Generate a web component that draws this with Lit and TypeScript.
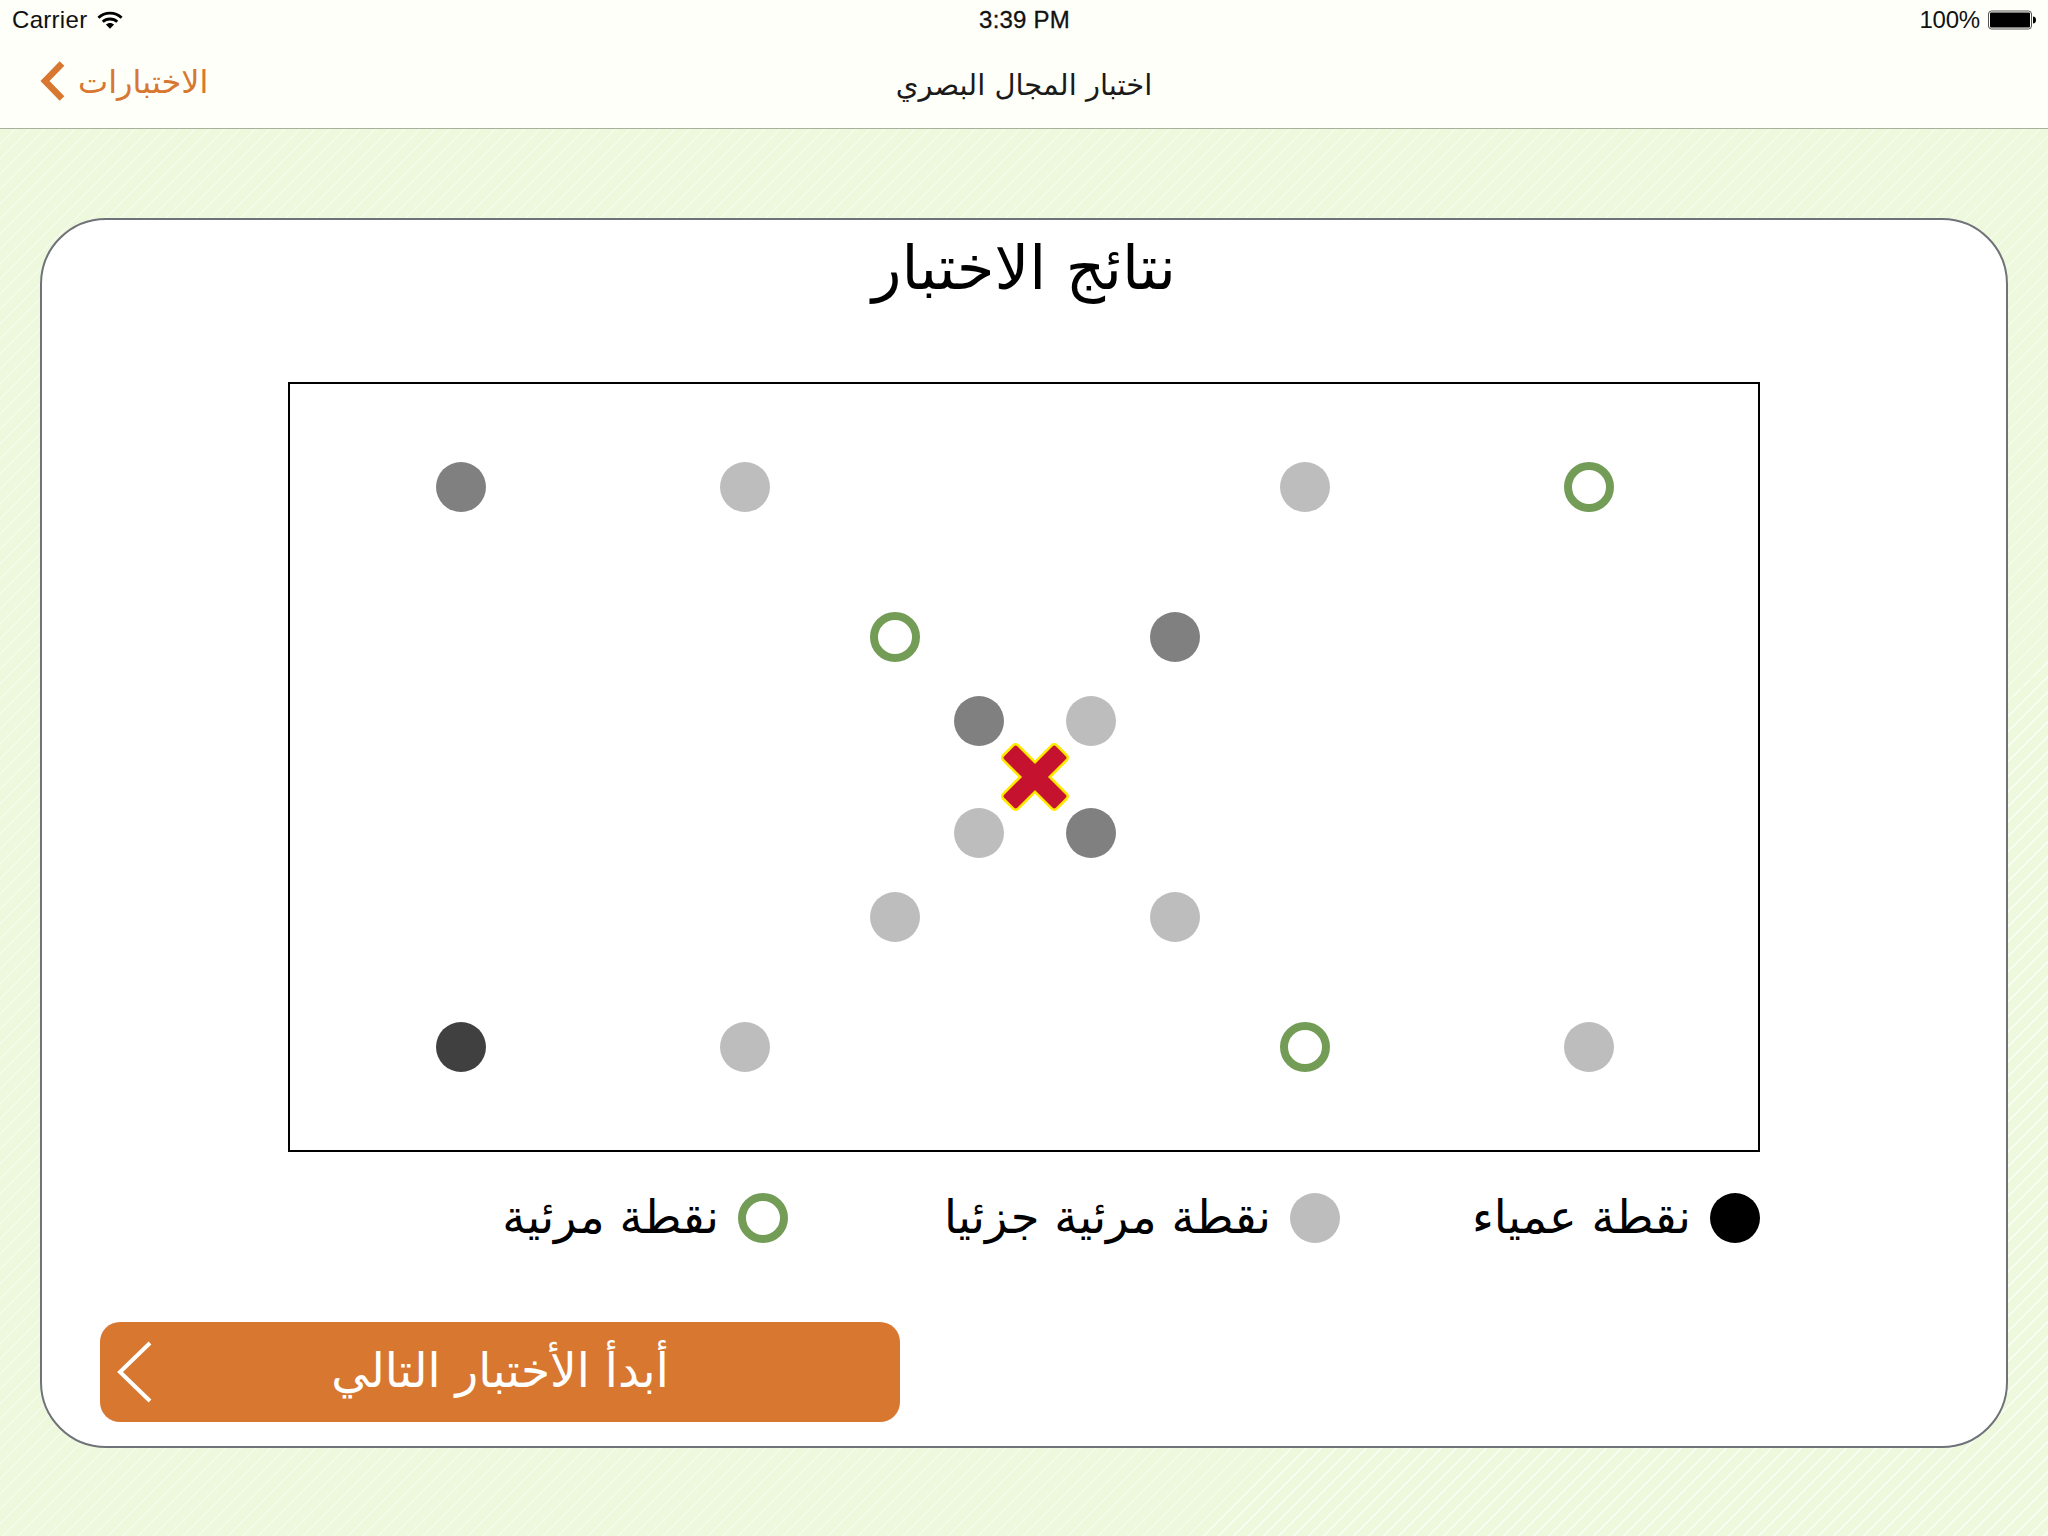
import { LitElement, html, css, svg } from "lit";
import { customElement } from "lit/decorators.js";

type Kind = "mid" | "light" | "dark" | "ring";
const BOARD_X = 290;
const BOARD_Y = 384;
const DOTS: [number, number, Kind][] = [
  [461, 487, "mid"], [745, 487, "light"], [1305, 487, "light"], [1589, 487, "ring"],
  [895, 637, "ring"], [1175, 637, "mid"],
  [979, 721, "mid"], [1091, 721, "light"],
  [979, 833, "light"], [1091, 833, "mid"],
  [895, 917, "light"], [1175, 917, "light"],
  [461, 1047, "dark"], [745, 1047, "light"], [1305, 1047, "ring"], [1589, 1047, "light"],
];

const CROSS = "M-7 -34.3H7V-7H34.3V7H7V34.3H-7V7H-34.3V-7H-7Z";

@customElement("app-root")
export class AppRoot extends LitElement {
  static styles = css`
    :host { display: block; width: 2048px; height: 1536px; overflow: hidden; font-family: "Liberation Sans", sans-serif; }
    .page {
      width: 2048px; height: 1536px; display: flex; flex-direction: column;
      background-color: #edf8dd;
      background-image: repeating-linear-gradient(135deg, #edf8dd 0, #edf8dd 6.1px, #fbfef6 6.1px, #fbfef6 7px, #edf8dd 7px, #edf8dd 10.607px);
    }
    .head { background: #fdfff8; border-bottom: 1px solid #a9b09e; height: 128px; flex: none; }
    .status { height: 40px; display: grid; grid-template-columns: 1fr auto 1fr; align-items: center; font-size: 24px; color: #111; padding: 0 11px 0 12px; }
    .status-l { display: flex; align-items: center; gap: 10px; letter-spacing: 0.3px; }
    .status-r { display: flex; align-items: center; justify-content: flex-end; gap: 7px; letter-spacing: -0.2px; }
    .time { font-weight: 400; letter-spacing: 0.2px; -webkit-text-stroke: 0.3px #111; }
    .nav { height: 88px; display: grid; grid-template-columns: 1fr auto 1fr; align-items: center; padding: 0 40px; }
    .back { display: flex; align-items: center; gap: 12px; color: #d87730; font-size: 32px; }
    .back svg { display: block; margin-top: -6px; }
    .back span { margin-top: -4px; }
    .nav-title { font-size: 29px; color: #1a1a1a; margin-top: 2px; }
    .ar { font-family: "DejaVu Sans", sans-serif; }
    .main { flex: 1; padding: 89px 40px 0; }
    .card {
      box-sizing: border-box; width: 1968px; height: 1230px; background: #fff;
      border: 2px solid #6f7379; border-radius: 66px;
    }
    .title { margin: 0; height: 96px; line-height: 96px; text-align: center; font-size: 61px; font-weight: 400; color: #000; }
    .board {
      position: relative; box-sizing: border-box; width: 1472px; height: 770px; margin: 66px auto 0;
      border: 2px solid #000;
    }
    .dot { position: absolute; box-sizing: border-box; width: 50px; height: 50px; border-radius: 50%; }
    .mid { background: #808080; }
    .light { background: #bdbdbd; }
    .dark { background: #404040; }
    .black { background: #000; }
    .ring { border: 8px solid #739c57; background: #fff; }
    .cross { position: absolute; left: 709px; top: 357px; display: block; }
    .legend { width: 1472px; margin: 41px auto 0; display: grid; grid-template-columns: 420px 552px auto; justify-content: start; }
    .item { display: flex; align-items: center; gap: 19px; font-size: 46.5px; color: #000; height: 50px; }
    .item-text { margin-top: -2px; }
    .swatch { position: static; flex: none; }
    .go {
      position: relative; box-sizing: border-box; width: 800px; height: 100px; margin: 79px 0 0 58px;
      background: #d87730; border-radius: 20px; color: #fff; font-size: 47px;
      display: flex; align-items: center; justify-content: center;
    }
    .go span { margin-top: -4px; }
    .go svg { position: absolute; left: 15px; top: 19px; display: block; }
  `;

  private wifi() {
    return html`<svg width="26" height="20" viewBox="0 0 28 20">
      <path d="M1.5 7.6C8.5 .9 19.5 .9 26.5 7.6" fill="none" stroke="#000" stroke-width="3"/>
      <path d="M6.2 12C10.5 7.9 17.5 7.9 21.8 12" fill="none" stroke="#000" stroke-width="3"/>
      <path d="M9.6 14.9C12 12.6 16 12.6 18.4 14.9L14 19.4Z" fill="#000"/>
    </svg>`;
  }

  private battery() {
    return html`<svg width="50" height="20" viewBox="0 0 50 20">
      <rect x="1.5" y="1" width="43" height="18" rx="3" fill="none" stroke="#555" stroke-width="1"/>
      <rect x="3" y="2.5" width="40" height="15" rx="1" fill="#000"/>
      <path d="M46 6.5C48 6.5 49 8 49 10S48 13.5 46 13.5Z" fill="#000"/>
    </svg>`;
  }

  render() {
    return html`
      <div class="page">
        <header class="head">
          <div class="status">
            <div class="status-l"><span>Carrier</span>${this.wifi()}</div>
            <div class="time">3:39 PM</div>
            <div class="status-r"><span>100%</span>${this.battery()}</div>
          </div>
          <nav class="nav">
            <div class="back">
              <svg width="26" height="42" viewBox="0 0 26 42"><path d="M22 3.5L5 21L22 38.5" fill="none" stroke="#d87730" stroke-width="6.5"/></svg>
              <span class="ar" dir="rtl" lang="ar">الاختبارات</span>
            </div>
            <div class="nav-title ar" dir="rtl" lang="ar">اختبار المجال البصري</div>
            <div></div>
          </nav>
        </header>
        <main class="main">
          <section class="card">
            <h1 class="title ar" dir="rtl" lang="ar">نتائج الاختبار</h1>
            <div class="board">
              ${DOTS.map(([x, y, k]) => html`<span class="dot ${k}" style="left:${x - 25 - BOARD_X}px;top:${y - 25 - BOARD_Y}px"></span>`)}
              <svg class="cross" width="72" height="72" viewBox="-36 -36 72 72">
                ${svg`<g transform="rotate(45)">
                  <path d="${CROSS}" fill="#ffea00" stroke="#ffea00" stroke-width="9.6" stroke-linejoin="round"/>
                  <path d="${CROSS}" fill="#c4122f" stroke="#c4122f" stroke-width="4.4" stroke-linejoin="round"/>
                </g>`}
              </svg>
            </div>
            <div class="legend ar" dir="rtl" lang="ar">
              <div class="item"><span class="dot swatch black"></span><span class="item-text">نقطة عمياء</span></div>
              <div class="item"><span class="dot swatch light"></span><span class="item-text">نقطة مرئية جزئيا</span></div>
              <div class="item"><span class="dot swatch ring"></span><span class="item-text">نقطة مرئية</span></div>
            </div>
            <div class="go ar">
              <svg width="38" height="62" viewBox="0 0 38 62"><path d="M35 2L5 31L35 60" fill="none" stroke="#fff" stroke-width="4"/></svg>
              <span dir="rtl" lang="ar">أبدأ الأختبار التالي</span>
            </div>
          </section>
        </main>
      </div>
    `;
  }
}
